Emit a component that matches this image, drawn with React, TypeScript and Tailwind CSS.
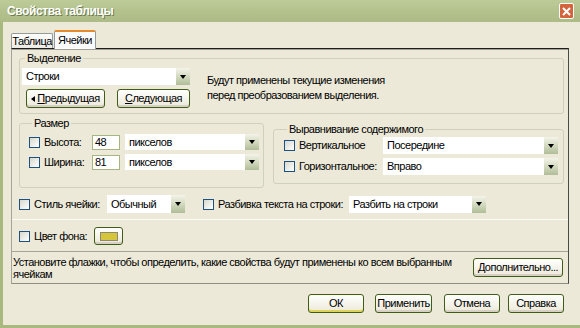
import type { ReactNode } from 'react';

function Checkbox() {
  return (
    <span className="block h-[11px] w-[11px] shrink-0 border border-[#1c5180] bg-gradient-to-br from-[#d8d8cf] to-white" />
  );
}

function Select({ value, w, h = 16 }: { value: string; w: number; h?: number }) {
  return (
    <div className="flex shrink-0 bg-white" style={{ width: w, height: h }}>
      <span className="flex-1 truncate pl-[4px]" style={{ lineHeight: `${h}px` }}>
        {value}
      </span>
      <span className="flex w-[14px] items-center justify-center bg-gradient-to-b from-[#f4f4ea] via-[#d3dac0] to-[#b0bd98]">
        <span className="block h-0 w-0 border-x-[3.5px] border-t-[4px] border-x-transparent border-t-black" />
      </span>
    </div>
  );
}

function Button({ children, w, h = 19, def = false }: { children: ReactNode; w: number; h?: number; def?: boolean }) {
  return (
    <div
      className={`flex shrink-0 items-center justify-center rounded-[3px] border border-[#3f5c18] bg-gradient-to-b from-white to-[#ece9d8] ${
        def ? 'shadow-[inset_0_-2px_0_#e0d35a,inset_0_1px_0_#fffbe0]' : 'shadow-[inset_0_-2px_0_#d6d0c5]'
      }`}
      style={{ width: w, height: h }}
    >
      {children}
    </div>
  );
}

function Group({ title, className, children }: { title: string; className: string; children: ReactNode }) {
  return (
    <fieldset className={`rounded-[3px] border border-[#d0d0bf] ${className}`}>
      <legend className="ml-[3px] px-[2px] leading-[13px]">{title}</legend>
      {children}
    </fieldset>
  );
}

export default function App() {
  return (
    <div className="flex h-[328px] w-[580px] flex-col overflow-hidden bg-[#ece9d8] font-['Liberation_Sans',Arial,sans-serif] text-[11px] tracking-[-0.5px] text-black">
      {/* title bar */}
      <div className="flex h-[22px] shrink-0 items-center justify-between bg-gradient-to-b from-[#bccb98] via-[#b3c28d] to-[#adbc86] pl-[7px] pr-[6px]">
        <span className="text-[12px] font-bold tracking-[-0.4px] text-white [text-shadow:1px_1px_0_#6d7a4c]">Свойства таблицы</span>
        <span className="flex h-[16px] w-[15px] items-center justify-center rounded-[2px] border border-white bg-[#d3643d]">
          <svg width="11" height="11" viewBox="0 0 11 11">
            <path d="M2 2 L9 9 M9 2 L2 9" stroke="white" strokeWidth="2" />
          </svg>
        </span>
      </div>

      <div className="flex flex-1 flex-col border-b-[3px] border-l-[3px] border-[#a9b87e]">
        {/* tabs */}
        <div className="ml-[8px] mt-[8px] flex h-[18px] items-end">
          <div className="flex h-[15px] w-[42px] items-center justify-center rounded-t-[2px] border border-b-0 border-[#919b9c] bg-gradient-to-b from-white to-[#ecebe6]">
            Таблица
          </div>
          <div className="relative z-10 -mb-[1px] ml-[1px] flex h-[19px] w-[42px] items-center justify-center rounded-t-[2px] border-x border-t-2 border-x-[#919b9c] border-t-[#e68b2c] bg-[#fcfcfe]">
            Ячейки
          </div>
        </div>

        {/* panel */}
        <div className="ml-[8px] flex h-[236px] w-[558px] flex-col border border-b-[#8e8e85] border-l-[#a4a49a] border-r-[#4a4a44] border-t-[#1e1e1e] shadow-[inset_0_1px_0_#a0a097]">
          <Group title="Выделение" className="ml-[7px] mt-[3px] h-[62px] w-[545px] pl-[2px]">
            <div className="mt-[3px] flex">
              <div className="flex w-[168px] flex-col">
                <Select value="Строки" w={168} h={17} />
                <div className="ml-[4px] mt-[4px] flex gap-[12px]">
                  <Button w={79} h={19}>
                    <span className="mr-[2px] inline-block h-0 w-0 border-y-[3px] border-r-[4px] border-y-transparent border-r-black" />
                    <span className="underline decoration-1 underline-offset-1">П</span>редыдущая
                  </Button>
                  <Button w={73} h={19}>
                    <span className="underline decoration-1 underline-offset-1">С</span>ледующая
                  </Button>
                </div>
              </div>
              <div className="ml-[17px] mt-[5px] flex flex-col leading-[15px]">
                <span>Будут применены текущие изменения</span>
                <span>перед преобразованием выделения.</span>
              </div>
            </div>
          </Group>

          <div className="mt-[3px] flex items-start">
            <Group title="Размер" className="ml-[7px] h-[71px] w-[245px] pl-[9px]">
              <div className="mt-[4px] flex flex-col gap-[4px]">
                <div className="flex h-[16px] items-center">
                  <Checkbox />
                  <span className="ml-[4px] w-[48px]">Высота:</span>
                  <span className="h-[15px] w-[28px] border border-[#a5b584] bg-white pl-[2px] leading-[13px]">48</span>
                  <span className="ml-[5px]">
                    <Select value="пикселов" w={134} />
                  </span>
                </div>
                <div className="flex h-[16px] items-center">
                  <Checkbox />
                  <span className="ml-[4px] w-[48px]">Ширина:</span>
                  <span className="h-[15px] w-[28px] border border-[#a5b584] bg-white pl-[2px] leading-[13px]">81</span>
                  <span className="ml-[5px]">
                    <Select value="пикселов" w={134} />
                  </span>
                </div>
              </div>
            </Group>
            <Group title="Выравнивание содержимого" className="ml-[9px] mt-[6px] h-[61px] w-[291px] pl-[10px]">
              <div className="mt-[1px] flex flex-col gap-[4px]">
                <div className="flex h-[17px] items-center">
                  <Checkbox />
                  <span className="ml-[4px] w-[84px]">Вертикальное</span>
                  <Select value="Посередине" w={175} h={17} />
                </div>
                <div className="flex h-[17px] items-center">
                  <Checkbox />
                  <span className="ml-[4px] w-[84px]">Горизонтальное:</span>
                  <Select value="Вправо" w={175} h={17} />
                </div>
              </div>
            </Group>
          </div>

          <div className="ml-[7px] mt-[7px] flex h-[18px] items-center">
            <Checkbox />
            <span className="ml-[4px] w-[73px]">Стиль ячейки:</span>
            <Select value="Обычный" w={78} h={18} />
            <span className="ml-[18px]">
              <Checkbox />
            </span>
            <span className="ml-[4px] w-[131px]">Разбивка текста на строки:</span>
            <Select value="Разбить на строки" w={137} h={17} />
          </div>

          <div className="mt-[6px] h-px bg-[#fbfbf8]" />

          <div className="ml-[7px] mt-[7px] flex h-[18px] items-center">
            <Checkbox />
            <span className="ml-[4px] w-[60px]">Цвет фона:</span>
            <Button w={29} h={18}>
              <span className="block h-[9px] w-[18px] border border-[#8a8a70] bg-[#d4c53b]" />
            </Button>
          </div>

          <div className="mt-[6px] h-px bg-[#a4a49a]" />

          <div className="flex flex-1 items-center justify-between pr-[5px]">
            <p className="w-[440px] pl-[1px] leading-[12px]">
              Установите флажки, чтобы определить, какие свойства будут применены ко всем выбранным ячейкам
            </p>
            <Button w={90} h={19}>
              <span className="underline decoration-1 underline-offset-1">Д</span>ополнительно...
            </Button>
          </div>
        </div>

        {/* bottom buttons */}
        <div className="ml-[305px] mt-[10px] flex">
          <Button w={56} h={19} def>
            ОК
          </Button>
          <span className="ml-[11px]">
            <Button w={57} h={19}>
              Применить
            </Button>
          </span>
          <span className="ml-[12px]">
            <Button w={56} h={19}>
              Отмена
            </Button>
          </span>
          <span className="ml-[8px]">
            <Button w={56} h={19}>
              Справка
            </Button>
          </span>
        </div>
      </div>
    </div>
  );
}
